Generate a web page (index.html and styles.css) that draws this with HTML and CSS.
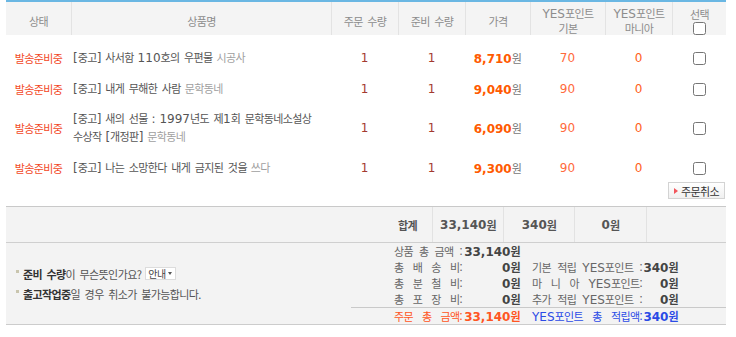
FILE: index.html
```html
<!DOCTYPE html>
<html lang="ko">
<head>
<meta charset="utf-8">
<title>주문 상품</title>
<link rel="stylesheet" href="styles.css">
</head>
<body>
<div class="wrap">
  <table class="orders">
    <colgroup>
      <col class="c-status"><col class="c-title"><col class="c-qty"><col class="c-qty">
      <col class="c-price"><col class="c-pt1"><col class="c-pt2"><col class="c-sel">
    </colgroup>
    <thead>
      <tr>
        <th>상태</th>
        <th>상품명</th>
        <th>주문 수량</th>
        <th>준비 수량</th>
        <th>가격</th>
        <th><span class="en">YES</span>포인트<br>기본</th>
        <th><span class="en">YES</span>포인트<br>마니아</th>
        <th class="th-sel">선택<input class="chk chk-head" type="checkbox"></th>
      </tr>
    </thead>
    <tbody>
      <tr class="spacer"><td colspan="8"></td></tr>
      <tr class="row">
        <td class="status k">발송준비중</td>
        <td class="title">[<span class="k">중고</span>] <span class="k">사서함</span> 110<span class="k">호의 우편물</span> <span class="k pub">시공사</span></td>
        <td class="qty">1</td>
        <td class="qty">1</td>
        <td class="price"><b>8,710</b><span class="k won">원</span></td>
        <td class="pt">70</td>
        <td class="pt0">0</td>
        <td><input class="chk" type="checkbox"></td>
      </tr>
      <tr class="row">
        <td class="status k">발송준비중</td>
        <td class="title">[<span class="k">중고</span>] <span class="k">내게 무해한 사람</span> <span class="k pub">문학동네</span></td>
        <td class="qty">1</td>
        <td class="qty">1</td>
        <td class="price"><b>9,040</b><span class="k won">원</span></td>
        <td class="pt">90</td>
        <td class="pt0">0</td>
        <td><input class="chk" type="checkbox"></td>
      </tr>
      <tr class="row row-tall">
        <td class="status k">발송준비중</td>
        <td class="title">[<span class="k">중고</span>] <span class="k">새의 선물</span> : 1997<span class="k">년도 제</span>1<span class="k">회 문학동네소설상</span><br><span class="k">수상작</span> [<span class="k">개정판</span>] <span class="k pub">문학동네</span></td>
        <td class="qty">1</td>
        <td class="qty">1</td>
        <td class="price"><b>6,090</b><span class="k won">원</span></td>
        <td class="pt">90</td>
        <td class="pt0">0</td>
        <td><input class="chk" type="checkbox"></td>
      </tr>
      <tr class="row">
        <td class="status k">발송준비중</td>
        <td class="title">[<span class="k">중고</span>] <span class="k">나는 소망한다 내게 금지된 것을</span> <span class="k pub">쓰다</span></td>
        <td class="qty">1</td>
        <td class="qty">1</td>
        <td class="price"><b>9,300</b><span class="k won">원</span></td>
        <td class="pt">90</td>
        <td class="pt0">0</td>
        <td><input class="chk" type="checkbox"></td>
      </tr>
    </tbody>
  </table>

  <div class="actions">
    <button class="btn-cancel" type="button"><span class="k">주문취소</span></button>
  </div>

  <div class="total">
    <div class="t-label k">합계</div>
    <div class="t-cell">33,140<span class="k">원</span></div>
    <div class="t-cell">340<span class="k">원</span></div>
    <div class="t-cell">0<span class="k">원</span></div>
    <div class="t-cell"></div>
  </div>

  <div class="foot">
    <div class="notes">
      <p class="note"><i class="dot"></i><b class="k strong">준비 수량</b><span class="k">이 무슨뜻인가요?</span> <span class="sel"><span class="k">안내</span><i class="caret"></i></span></p>
      <p class="note"><i class="dot"></i><b class="k strong">출고작업중</b><span class="k">일 경우 취소가 불가능합니다.</span></p>
    </div>
    <div class="calc">
      <div class="calc-row">
        <span class="lbl k">상품 총 금액 :</span>
        <span class="val">33,140<span class="k">원</span></span>
      </div>
      <div class="calc-row">
        <span class="lbl k">총 배 송 비:</span>
        <span class="val">0<span class="k">원</span></span>
        <span class="lbl lbl-b k">기본 적립 <span class="en">YES</span>포인트 :</span>
        <span class="val">340<span class="k">원</span></span>
      </div>
      <div class="calc-row">
        <span class="lbl k">총 분 철 비:</span>
        <span class="val">0<span class="k">원</span></span>
        <span class="lbl lbl-b k">마 니 아 <span class="en">YES</span>포인트:</span>
        <span class="val">0<span class="k">원</span></span>
      </div>
      <div class="calc-row">
        <span class="lbl k">총 포 장 비:</span>
        <span class="val">0<span class="k">원</span></span>
        <span class="lbl lbl-b k">추가 적립 <span class="en">YES</span>포인트 :</span>
        <span class="val">0<span class="k">원</span></span>
      </div>
      <div class="calc-row calc-sum">
        <span class="lbl k red">주문 총 금액:</span>
        <span class="val red">33,140<span class="k">원</span></span>
        <span class="lbl lbl-b k blue"><span class="en">YES</span>포인트 총 적립액:</span>
        <span class="val blue">340<span class="k">원</span></span>
      </div>
    </div>
  </div>
</div>
</body>
</html>
```
FILE: styles.css
```css
* { box-sizing: border-box; }
html, body { margin: 0; padding: 0; background: #fff; }
body {
  font-family: "DejaVu Sans", "Noto Sans CJK KR", sans-serif;
  font-size: 12px;
  color: #555;
}
p { margin: 0; }

.k {
  font-family: "Noto Sans CJK KR", sans-serif;
  font-size: 11px;
  letter-spacing: -0.6px;
  word-spacing: 2px;
}
.en {
  font-family: "DejaVu Sans", sans-serif;
  font-size: 12px;
  letter-spacing: 0;
  word-spacing: 0;
}

.wrap { width: 726px; padding-left: 6px; }

/* order table */
.orders {
  width: 720px;
  table-layout: fixed;
  border-collapse: separate;
  border-spacing: 0;
  border-top: 2px solid #6ab7e3;
}
.c-status { width: 65px; }
.c-title { width: 260px; }
.c-qty { width: 67px; }
.c-price { width: 65px; }
.c-pt1 { width: 75px; }
.c-pt2 { width: 67px; }
.c-sel { width: 54px; }

.orders th {
  height: 33px;
  padding: 4px 0 0;
  background: #f4f4f4;
  color: #8c8c8c;
  font-family: "Noto Sans CJK KR", sans-serif;
  font-size: 11px;
  letter-spacing: -0.6px;
  word-spacing: 2px;
  font-weight: normal;
  line-height: 14px;
  text-align: center;
  vertical-align: middle;
}
.orders th + th { border-left: 1px solid #e3e3e3; }
.orders th.th-sel { vertical-align: top; padding-top: 5px; }
.chk {
  width: 13px;
  height: 13px;
  margin: 0;
  vertical-align: middle;
}
.chk-head { display: block; margin: 1px auto 0; }

.orders td {
  padding: 0;
  text-align: center;
  vertical-align: middle;
}
.spacer td { height: 7px; }
.row td { height: 31px; }
.row-tall td { height: 48px; }

.status { color: #f3481f; }
.title {
  text-align: left !important;
  padding-left: 2px !important;
  color: #555;
  line-height: 17px;
  white-space: nowrap;
}
.pub { color: #a0a0a0; }
.qty { color: #a33a30; }
.price b { color: #ff5a00; font-weight: bold; }
.price .won { color: #777; }
.pt { color: #ff6a3c; }
.pt0 { color: #ff6020; }

/* cancel button */
.actions {
  display: flex;
  justify-content: flex-end;
  margin-top: -1px;
  padding-right: 1px;
}
.btn-cancel {
  display: flex;
  align-items: center;
  gap: 3px;
  width: 57px;
  height: 17px;
  padding: 0 0 0 5px;
  border: 1px solid #d3d3d3;
  background: linear-gradient(#ffffff, #f0f0f0);
  color: #333;
  font: inherit;
  cursor: pointer;
}
.btn-cancel::before {
  content: "";
  border-left: 4px solid #f2555c;
  border-top: 3px solid transparent;
  border-bottom: 3px solid transparent;
}

/* total bar */
.total {
  display: grid;
  grid-template-columns: 426px 71px 71px 72px 80px;
  height: 37px;
  margin-top: 7px;
  background: #f3f3f3;
  border-top: 1px solid #c9c9c9;
  border-bottom: 1px solid #cfcfcf;
  font-weight: bold;
  color: #555;
}
.total > div {
  display: flex;
  align-items: center;
  justify-content: center;
}
.total .t-label { justify-content: flex-end; padding-right: 15px; font-weight: bold; }
.total .t-cell { border-left: 1px solid #e2e2e2; }

/* footer */
.foot {
  display: flex;
  height: 82px;
  background: #f3f3f3;
  border-bottom: 1px solid #cccccc;
}
.notes {
  width: 345px;
  padding-left: 10px;
  display: flex;
  flex-direction: column;
  justify-content: center;
  line-height: 20px;
  color: #555;
}
.note { display: flex; align-items: center; white-space: nowrap; }
.dot {
  display: inline-block;
  width: 3px;
  height: 3px;
  margin: -5px 4px 0 0;
  background: #c9c5ae;
}
.strong { color: #333; font-weight: bold; }
.sel {
  display: inline-flex;
  align-items: center;
  gap: 2px;
  height: 13px;
  margin-left: 4px;
  padding: 0 3px 0 2px;
  border: 1px solid #dcdcdc;
  background: #fff;
  color: #444;
  line-height: 11px;
}
.sel .k { font-size: 10px; }
.caret {
  border-top: 3px solid #555;
  border-left: 2px solid transparent;
  border-right: 2px solid transparent;
}

.calc { width: 375px; }
.calc-row {
  display: grid;
  grid-template-columns: 68px 58px 122px 36px;
  height: 16px;
  padding-left: 43px;
  line-height: 16px;
  color: #666;
}
.lbl {
  text-align: justify;
  text-align-last: justify;
}
.lbl-b { padding-left: 12px; }
.val {
  text-align: right;
  white-space: nowrap;
  font-weight: bold;
  color: #444;
}
.calc-sum {
  height: 16px;
  border-top: 1px solid #c9c9c9;
}
.red { color: #ff5522; }
.blue { color: #2b4be6; }
.val.red { color: #ff5522; }
.val.blue { color: #2b4be6; }
```
